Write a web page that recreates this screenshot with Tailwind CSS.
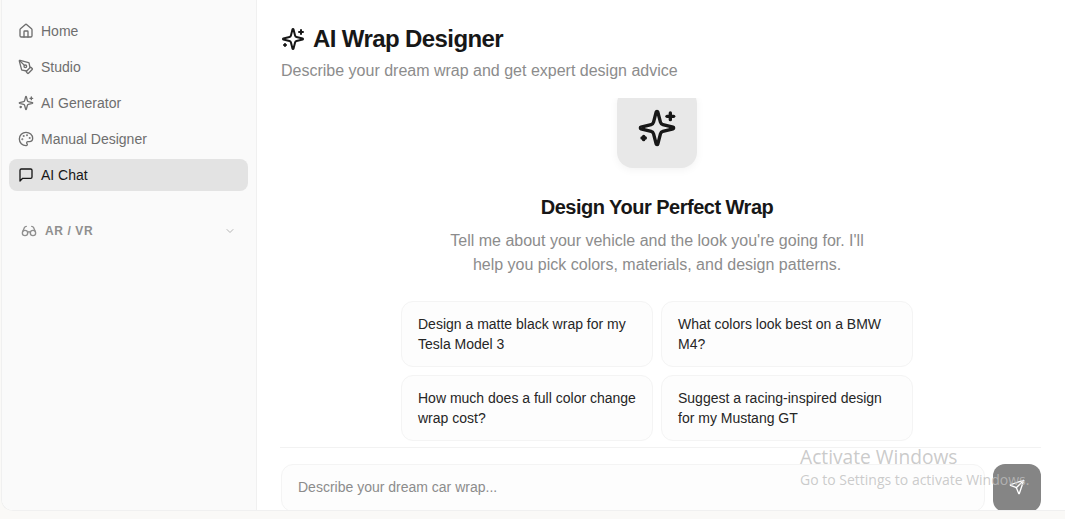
<!DOCTYPE html>
<html lang="en">
<head>
<meta charset="utf-8">
<title>AI Wrap Designer</title>
<script src="https://cdn.jsdelivr.net/npm/@tailwindcss/browser@4"></script>
</head>
<body class="relative h-[519px] w-[1065px] overflow-hidden bg-[#faf9f7] font-['Liberation_Sans',Arial,sans-serif]">
<div class="ml-px flex h-[511px] overflow-hidden rounded-bl-xl border-b border-l border-[#f0f0f0] bg-white">
  <aside class="flex w-[255px] shrink-0 flex-col border-r border-[#f0f0f0] bg-[#fafafa] pt-[15px] pr-2 pl-[7px]">
    <nav class="flex flex-col gap-1">
      <a class="flex h-8 items-center gap-[7px] rounded-lg px-[9px] text-sm text-[#6e6e6e]">
        <svg class="size-4" viewBox="0 0 24 24" fill="none" stroke="currentColor" stroke-width="2" stroke-linecap="round" stroke-linejoin="round"><path d="M15 21v-8a1 1 0 0 0-1-1h-4a1 1 0 0 0-1 1v8"/><path d="M3 10a2 2 0 0 1 .709-1.528l7-5.999a2 2 0 0 1 2.582 0l7 5.999A2 2 0 0 1 21 10v9a2 2 0 0 1-2 2H5a2 2 0 0 1-2-2z"/></svg>
        Home</a>
      <a class="flex h-8 items-center gap-[7px] rounded-lg px-[9px] text-sm text-[#6e6e6e]">
        <svg class="size-4" viewBox="0 0 24 24" fill="none" stroke="currentColor" stroke-width="2" stroke-linecap="round" stroke-linejoin="round"><path d="M15.707 21.293a1 1 0 0 1-1.414 0l-1.586-1.586a1 1 0 0 1 0-1.414l5.586-5.586a1 1 0 0 1 1.414 0l1.586 1.586a1 1 0 0 1 0 1.414z"/><path d="m18 13-1.375-6.874a1 1 0 0 0-.746-.776L3.235 2.028a1 1 0 0 0-1.207 1.207L5.35 15.879a1 1 0 0 0 .776.746L13 18"/><path d="m2.3 2.3 7.286 7.286"/><circle cx="11" cy="11" r="2"/></svg>
        Studio</a>
      <a class="flex h-8 items-center gap-[7px] rounded-lg px-[9px] text-sm text-[#6e6e6e]">
        <svg class="size-4" viewBox="0 0 24 24" fill="none" stroke="currentColor" stroke-width="2" stroke-linecap="round" stroke-linejoin="round"><path d="M9.937 15.5A2 2 0 0 0 8.5 14.063l-6.135-1.582a.5.5 0 0 1 0-.962L8.5 9.936A2 2 0 0 0 9.937 8.5l1.582-6.135a.5.5 0 0 1 .963 0L14.063 8.5A2 2 0 0 0 15.5 9.937l6.135 1.581a.5.5 0 0 1 0 .964L15.5 14.063a2 2 0 0 0-1.437 1.437l-1.582 6.135a.5.5 0 0 1-.963 0z"/><path d="M20 3v4"/><path d="M22 5h-4"/><path d="M4 17v2"/><path d="M5 18H3"/></svg>
        AI Generator</a>
      <a class="flex h-8 items-center gap-[7px] rounded-lg px-[9px] text-sm text-[#6e6e6e]">
        <svg class="size-4" viewBox="0 0 24 24" fill="none" stroke="currentColor" stroke-width="2" stroke-linecap="round" stroke-linejoin="round"><path d="M12 22a1 1 0 0 1 0-20 10 9 0 0 1 10 9 5 5 0 0 1-5 5h-2.25a1.75 1.75 0 0 0-1.4 2.8l.3.4a1.75 1.75 0 0 1-1.4 2.8z"/><circle cx="13.5" cy="6.5" r=".5" fill="currentColor"/><circle cx="17.5" cy="10.5" r=".5" fill="currentColor"/><circle cx="6.5" cy="12.5" r=".5" fill="currentColor"/><circle cx="8.5" cy="7.5" r=".5" fill="currentColor"/></svg>
        Manual Designer</a>
      <a class="flex h-8 items-center gap-[7px] rounded-lg bg-[#e3e3e3] px-[9px] text-sm text-[#171717]">
        <svg class="size-4" viewBox="0 0 24 24" fill="none" stroke="currentColor" stroke-width="2" stroke-linecap="round" stroke-linejoin="round"><path d="M21 15a2 2 0 0 1-2 2H7l-4 4V5a2 2 0 0 1 2-2h14a2 2 0 0 1 2 2z"/></svg>
        AI Chat</a>
    </nav>
    <div class="mt-6 flex h-8 items-center justify-between pl-3 pr-3 text-[#8f8f8f]">
      <div class="flex items-center gap-2 text-xs font-bold tracking-[0.6px]">
        <svg class="size-4" viewBox="0 0 24 24" fill="none" stroke="currentColor" stroke-width="2" stroke-linecap="round" stroke-linejoin="round"><circle cx="6" cy="15" r="4"/><circle cx="18" cy="15" r="4"/><path d="M14 15a2 2 0 0 0-2-2 2 2 0 0 0-2 2"/><path d="M2.5 13 5 7c.7-1.3 1.4-2 3-2"/><path d="M21.5 13 19 7c-.7-1.3-1.5-2-3-2"/></svg>
        AR / VR
      </div>
      <svg class="size-3 text-[#b5b5b5]" viewBox="0 0 24 24" fill="none" stroke="currentColor" stroke-width="2" stroke-linecap="round" stroke-linejoin="round"><path d="m6 9 6 6 6-6"/></svg>
    </div>
  </aside>
  <main class="flex min-w-0 flex-1 flex-col px-6">
    <header class="h-[98px] shrink-0 pt-[24px]">
      <div class="flex items-center gap-2">
        <svg class="size-6 text-[#171717]" viewBox="0 0 24 24" fill="none" stroke="currentColor" stroke-width="2" stroke-linecap="round" stroke-linejoin="round"><path d="M9.937 15.5A2 2 0 0 0 8.5 14.063l-6.135-1.582a.5.5 0 0 1 0-.962L8.5 9.936A2 2 0 0 0 9.937 8.5l1.582-6.135a.5.5 0 0 1 .963 0L14.063 8.5A2 2 0 0 0 15.5 9.937l6.135 1.581a.5.5 0 0 1 0 .964L15.5 14.063a2 2 0 0 0-1.437 1.437l-1.582 6.135a.5.5 0 0 1-.963 0z"/><path d="M20 3v4"/><path d="M22 5h-4"/><path d="M4 17v2"/><path d="M5 18H3"/></svg>
        <h1 class="text-2xl leading-[30px] font-bold tracking-tight text-[#171717]">AI Wrap Designer</h1>
      </div>
      <p class="mt-[5px] text-base text-[#8c8c8c]">Describe your dream wrap and get expert design advice</p>
    </header>
    <section class="h-[349px] shrink-0 overflow-hidden pr-2">
      <div class="-mt-[10px] flex flex-col items-center">
        <div class="flex size-20 items-center justify-center rounded-2xl bg-[#e8e8e8] text-[#171717] shadow-[0_2px_8px_rgba(0,0,0,0.05)]">
          <svg class="size-10" viewBox="0 0 24 24" fill="none" stroke="currentColor" stroke-width="2" stroke-linecap="round" stroke-linejoin="round"><path d="M9.937 15.5A2 2 0 0 0 8.5 14.063l-6.135-1.582a.5.5 0 0 1 0-.962L8.5 9.936A2 2 0 0 0 9.937 8.5l1.582-6.135a.5.5 0 0 1 .963 0L14.063 8.5A2 2 0 0 0 15.5 9.937l6.135 1.581a.5.5 0 0 1 0 .964L15.5 14.063a2 2 0 0 0-1.437 1.437l-1.582 6.135a.5.5 0 0 1-.963 0z"/><path d="M20 3v4"/><path d="M22 5h-4"/><path d="M4 17v2"/><path d="M5 18H3"/></svg>
        </div>
        <h2 class="mt-[25px] text-xl leading-[28px] font-bold tracking-tight text-[#171717]">Design Your Perfect Wrap</h2>
        <p class="mt-2 w-[448px] text-center text-base leading-6 text-[#8c8c8c]">Tell me about your vehicle and the look you're going for. I'll help you pick colors, materials, and design patterns.</p>
        <div class="mt-6 grid w-[512px] grid-cols-2 gap-2 text-sm text-[#262626]">
          <div class="rounded-xl border border-[#f4f4f4] bg-[#fdfdfd] px-4 py-3">Design a matte black wrap for my Tesla Model 3</div>
          <div class="rounded-xl border border-[#f4f4f4] bg-[#fdfdfd] px-4 py-3">What colors look best on a BMW M4?</div>
          <div class="rounded-xl border border-[#f4f4f4] bg-[#fdfdfd] px-4 py-3">How much does a full color change wrap cost?</div>
          <div class="rounded-xl border border-[#f4f4f4] bg-[#fdfdfd] px-4 py-3">Suggest a racing-inspired design for my Mustang GT</div>
        </div>
      </div>
    </section>
    <footer class="-ml-px flex flex-1 gap-2 border-t border-[#f2f2f2] pt-4 pl-px">
      <div class="flex h-[48px] flex-1 items-center rounded-xl border border-[#f4f4f4] bg-[#fdfdfd] px-4 pb-[2px] text-sm text-[#8c8c8c]">Describe your dream car wrap...</div>
      <button class="flex size-12 items-center justify-center rounded-xl bg-[#858585] pb-[2px] text-white">
        <svg class="size-4" viewBox="0 0 24 24" fill="none" stroke="currentColor" stroke-width="2" stroke-linecap="round" stroke-linejoin="round"><path d="M14.536 21.686a.5.5 0 0 0 .937-.024l6.5-19a.496.496 0 0 0-.635-.635l-19 6.5a.5.5 0 0 0-.024.937l7.93 3.18a2 2 0 0 1 1.112 1.11z"/><path d="m21.854 2.147-10.94 10.939"/></svg>
      </button>
    </footer>
  </main>
</div>
<div class="absolute top-[445px] left-[800px] font-['Open_Sans','DejaVu_Sans',sans-serif] text-[#bdbdbd]/80">
  <div class="text-[19.2px] leading-[24px]">Activate Windows</div>
  <div class="mt-[1px] text-[14px] leading-[20px] whitespace-nowrap">Go to Settings to activate Windows.</div>
</div>
</body>
</html>
